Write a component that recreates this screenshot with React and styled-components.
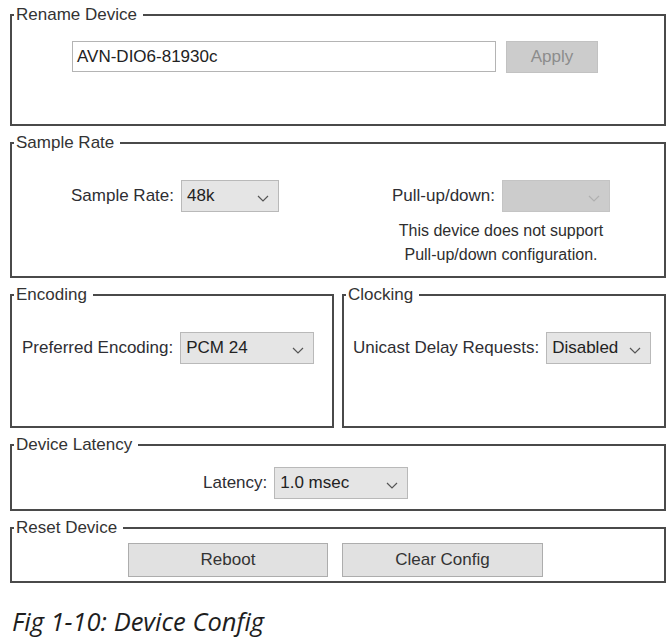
import React from "react";
import styled, { createGlobalStyle } from "styled-components";

const GlobalStyle = createGlobalStyle`
  body {
    margin: 0;
    background: #ffffff;
    font-family: "Liberation Sans", Arial, sans-serif;
  }
`;

const Page = styled.div`
  width: 656px;
  padding: 5px 0 0 10px;
  display: flex;
  flex-direction: column;
  gap: 7px;
`;

const Row = styled.div`
  display: flex;
  gap: 8px;
`;

const Group = styled.fieldset`
  margin: 0;
  padding: 0;
  border: 2px solid #4a4a4a;
  flex: 1;
  min-width: 0;
`;

const Legend = styled.legend`
  margin-left: 2px;
  padding: 0 6px 0 2px;
  font-size: 17px;
  line-height: 20px;
  color: #333;
`;

const Body = styled.div`
  height: ${(p) => p.$h}px;
  box-sizing: border-box;
  padding-top: ${(p) => p.$top}px;
  padding-left: ${(p) => p.$left || 0}px;
  display: flex;
  align-items: flex-start;
  gap: ${(p) => p.$gap || 0}px;
`;

const Half = styled.div`
  flex: 1;
  display: flex;
  flex-direction: column;
  align-items: center;
`;

const Field = styled.div`
  display: flex;
  align-items: center;
  gap: 7px;
`;

const Label = styled.span`
  font-size: 17px;
  color: #2e2e33;
`;

const Note = styled.div`
  margin-top: 7px;
  font-size: 16px;
  line-height: 24px;
  color: #2e2e2e;
  text-align: center;
`;

const TextBox = styled.div`
  width: 424px;
  height: 31px;
  box-sizing: border-box;
  border: 1px solid #b4b4b4;
  background: #fff;
  padding-left: 4px;
  display: flex;
  align-items: center;
  font-size: 17px;
  color: #222;
`;

const Button = styled.div`
  width: ${(p) => p.$w}px;
  height: ${(p) => p.$h}px;
  box-sizing: border-box;
  border: 1px solid ${(p) => (p.$disabled ? "#c2c2c2" : "#adadad")};
  background: ${(p) => (p.$disabled ? "#cccccc" : "#e1e1e1")};
  color: ${(p) => (p.$disabled ? "#8c8c8c" : "#333")};
  display: flex;
  align-items: center;
  justify-content: center;
  font-size: 17px;
`;

const Select = styled.div`
  width: ${(p) => p.$w}px;
  height: 32px;
  box-sizing: border-box;
  border: 1px solid ${(p) => (p.$disabled ? "#c4c4c4" : "#b9b9b9")};
  background: ${(p) => (p.$disabled ? "#cccccc" : "#e5e5e5")};
  padding: 0 9px 0 5px;
  display: flex;
  align-items: center;
  justify-content: space-between;
  font-size: 17px;
  color: #222;
`;

const Chevron = styled.svg`
  margin-top: 4px;
  flex: none;
`;

const Caption = styled.div`
  margin-top: 14px;
  padding-left: 2px;
  font-family: "Open Sans", sans-serif;
  font-style: italic;
  font-size: 25.5px;
  color: #1e1e1e;
`;

function Dropdown({ value, w, disabled }) {
  return (
    <Select $w={w} $disabled={disabled}>
      <span>{value}</span>
      <Chevron width="12" height="7" viewBox="0 0 12 7">
        <path
          d="M1 1 L6 6 L11 1"
          fill="none"
          stroke={disabled ? "#b0b0b0" : "#555"}
          strokeWidth="1.2"
        />
      </Chevron>
    </Select>
  );
}

export default function App() {
  return (
    <>
      <GlobalStyle />
      <Page>
        <Group>
          <Legend>Rename Device</Legend>
          <Body $h={99} $top={16} $left={60} $gap={10}>
            <TextBox>AVN-DIO6-81930c</TextBox>
            <Button $w={92} $h={32} $disabled>
              Apply
            </Button>
          </Body>
        </Group>

        <Group>
          <Legend>Sample Rate</Legend>
          <Body $h={123} $top={27}>
            <Half>
              <Field>
                <Label>Sample Rate:</Label>
                <Dropdown value="48k" w={98} />
              </Field>
            </Half>
            <Half>
              <Field>
                <Label>Pull-up/down:</Label>
                <Dropdown value="" w={108} disabled />
              </Field>
              <Note>
                This device does not support
                <br />
                Pull-up/down configuration.
              </Note>
            </Half>
          </Body>
        </Group>

        <Row>
          <Group>
            <Legend>Encoding</Legend>
            <Body $h={121} $top={27} $left={10}>
              <Field>
                <Label>Preferred Encoding:</Label>
                <Dropdown value="PCM 24" w={134} />
              </Field>
            </Body>
          </Group>
          <Group>
            <Legend>Clocking</Legend>
            <Body $h={121} $top={27} $left={9}>
              <Field>
                <Label>Unicast Delay Requests:</Label>
                <Dropdown value="Disabled" w={105} />
              </Field>
            </Body>
          </Group>
        </Row>

        <Group>
          <Legend>Device Latency</Legend>
          <Body $h={54} $top={12} $left={191}>
            <Field>
              <Label>Latency:</Label>
              <Dropdown value="1.0 msec" w={134} />
            </Field>
          </Body>
        </Group>

        <Group>
          <Legend>Reset Device</Legend>
          <Body $h={43} $top={5} $left={116} $gap={14}>
            <Button $w={200} $h={34}>
              Reboot
            </Button>
            <Button $w={201} $h={34}>
              Clear Config
            </Button>
          </Body>
        </Group>

        <Caption>Fig 1-10: Device Config</Caption>
      </Page>
    </>
  );
}
